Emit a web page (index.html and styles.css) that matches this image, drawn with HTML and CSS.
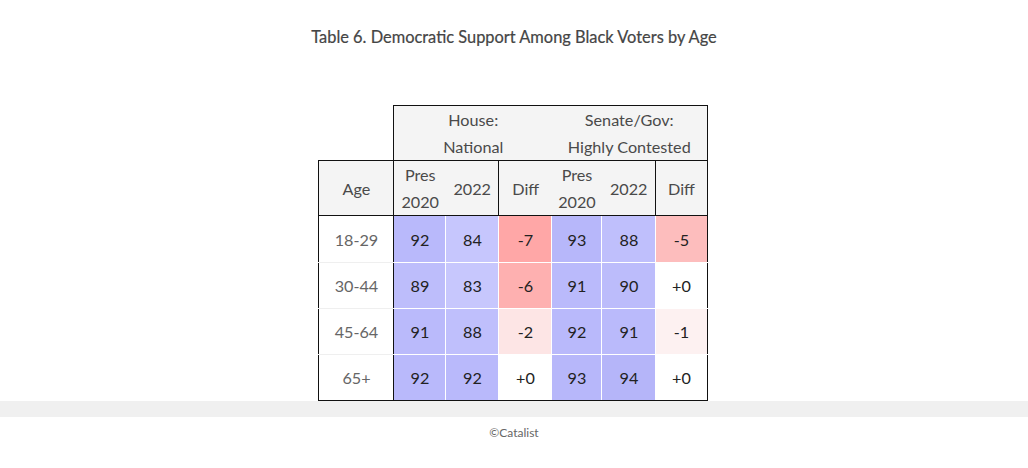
FILE: index.html
```html
<!DOCTYPE html>
<html>
<head>
<meta charset="utf-8">
<link rel="stylesheet" href="styles.css">
</head>
<body>
<div class="page">
  <h1 class="title">Table 6. Democratic Support Among Black Voters by Age</h1>
  <table class="grid">
    <colgroup>
      <col class="c-age"><col class="c-p1"><col class="c-y1"><col class="c-d1"><col class="c-p2"><col class="c-y2"><col class="c-d2">
    </colgroup>
    <thead>
      <tr class="group-row">
        <th class="blank"></th>
        <th colspan="3" class="grp grp-l">House:<br>National</th>
        <th colspan="3" class="grp grp-r">Senate/Gov:<br>Highly Contested</th>
      </tr>
      <tr class="head-row">
        <th class="h age-h">Age</th>
        <th class="h">Pres<br>2020</th>
        <th class="h">2022</th>
        <th class="h bl">Diff</th>
        <th class="h">Pres<br>2020</th>
        <th class="h">2022</th>
        <th class="h bl br">Diff</th>
      </tr>
    </thead>
    <tbody>
      <tr class="first">
        <td class="age">18-29</td>
        <td class="v" style="background:#b9b9fb">92</td>
        <td class="v" style="background:#c6c6fd">84</td>
        <td class="v bl" style="background:#ffa7a7">-7</td>
        <td class="v" style="background:#b7b7fa">93</td>
        <td class="v" style="background:#bfbffc">88</td>
        <td class="v bl br" style="background:#fdbdbd">-5</td>
      </tr>
      <tr>
        <td class="age">30-44</td>
        <td class="v" style="background:#bdbdfb">89</td>
        <td class="v" style="background:#c7c7fd">83</td>
        <td class="v bl" style="background:#feb0b0">-6</td>
        <td class="v" style="background:#babafb">91</td>
        <td class="v" style="background:#bcbcfb">90</td>
        <td class="v bl br" style="background:#ffffff">+0</td>
      </tr>
      <tr>
        <td class="age">45-64</td>
        <td class="v" style="background:#babafb">91</td>
        <td class="v" style="background:#bfbffc">88</td>
        <td class="v bl" style="background:#fde5e5">-2</td>
        <td class="v" style="background:#b9b9fb">92</td>
        <td class="v" style="background:#babafb">91</td>
        <td class="v bl br" style="background:#fdf1f1">-1</td>
      </tr>
      <tr class="last">
        <td class="age">65+</td>
        <td class="v" style="background:#b9b9fb">92</td>
        <td class="v" style="background:#b9b9fb">92</td>
        <td class="v bl" style="background:#ffffff">+0</td>
        <td class="v" style="background:#b7b7fa">93</td>
        <td class="v" style="background:#b5b5f9">94</td>
        <td class="v bl br" style="background:#ffffff">+0</td>
      </tr>
    </tbody>
  </table>
  <div class="band"></div>
  <div class="footer">©Catalist</div>
</div>
</body>
</html>
```

FILE: styles.css
```css
html, body {
  margin: 0;
  padding: 0;
  background: #ffffff;
}

.page {
  width: 1028px;
  font-family: Lato, "Liberation Sans", sans-serif;
}

.title {
  margin: 0;
  height: 74px;
  line-height: 74px;
  text-align: center;
  font-size: 16.4px;
  font-weight: normal;
  color: #454545;
  -webkit-text-stroke: 0.2px #454545;
}

.grid {
  margin: 31px auto 0;
  border-collapse: collapse;
  table-layout: fixed;
  width: 388px;
  position: relative;
  left: -1px;
}

.c-age { width: 75px; }
.c-p1 { width: 52px; }
.c-y1 { width: 53px; }
.c-d1 { width: 53px; }
.c-p2 { width: 50px; }
.c-y2 { width: 54px; }
.c-d2 { width: 51px; }

.grid th, .grid td {
  padding: 0;
  text-align: center;
  font-weight: normal;
  font-size: 16.2px;
}

.blank {
  border: none;
  background: #ffffff;
}

.group-row th.grp {
  background: #f4f4f4;
  color: #4a4a4a;
  line-height: 27px;
  height: 54px;
  border-top: 1px solid #111;
}

.grp-l { border-left: 1px solid #111; }
.grp-r { border-right: 1px solid #111; }

.head-row th.h {
  background: #f4f4f4;
  color: #4a4a4a;
  line-height: 27px;
  height: 54px;
  border-top: 1px solid #111;
  border-bottom: 1px solid #111;
}

.head-row th.age-h {
  border-left: 1px solid #111;
  border-right: 1px solid #111;
}

.bl { border-left: 1px solid #111; }
.br { border-right: 1px solid #111; }

.grid td {
  height: 45px;
  border-top: 1px solid #efefef;
  border-bottom: 1px solid #efefef;
}

.grid tr.first td {
  height: 46px;
}

.grid td.v {
  color: #222;
  border-right: 1px solid #ffffff;
  border-top: 1px solid #ffffff;
  border-bottom: 1px solid #ffffff;
}

.grid td.v.bl { border-left: 1px solid #111; }
.grid td.v.br { border-right: 1px solid #111; }

.grid td.age {
  color: #666;
  background: #ffffff;
  border-left: 1px solid #111;
  border-right: 1px solid #111;
}

.grid tr.last td {
  border-bottom: 1px solid #111;
}

.band {
  height: 16px;
  background: #f0f0f0;
}

.footer {
  text-align: center;
  font-size: 12px;
  color: #666;
  line-height: 16px;
  padding-top: 8px;
}
```
